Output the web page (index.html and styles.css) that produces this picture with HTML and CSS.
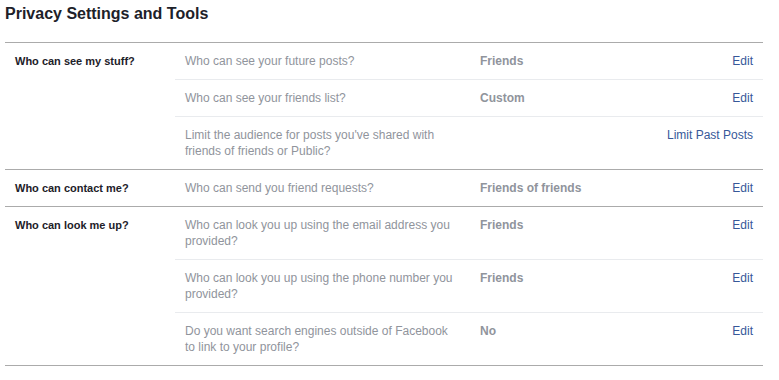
FILE: index.html
```html
<!DOCTYPE html>
<html>
<head>
  <title>Privacy Settings and Tools</title>
  <link rel="stylesheet" href="styles.css">
</head>
<body>
  <div class="page">
    <!-- Page Title -->
    <h1 class="title">Privacy Settings and Tools</h1>

    <!-- Who can see my stuff -->
    <div class="section">
      <div class="section-label">Who can see my stuff?</div>
      <div class="rows">
        <div class="row">
          <div class="question">Who can see your future posts?</div>
          <div class="value">Friends</div>
          <a class="action" href="#">Edit</a>
        </div>
        <div class="row">
          <div class="question">Who can see your friends list?</div>
          <div class="value">Custom</div>
          <a class="action" href="#">Edit</a>
        </div>
        <div class="row">
          <div class="question">Limit the audience for posts you've shared with friends of friends or Public?</div>
          <div class="value"></div>
          <a class="action" href="#">Limit Past Posts</a>
        </div>
      </div>
    </div>

    <!-- Who can contact me -->
    <div class="section">
      <div class="section-label">Who can contact me?</div>
      <div class="rows">
        <div class="row">
          <div class="question">Who can send you friend requests?</div>
          <div class="value">Friends of friends</div>
          <a class="action" href="#">Edit</a>
        </div>
      </div>
    </div>

    <!-- Who can look me up -->
    <div class="section last">
      <div class="section-label">Who can look me up?</div>
      <div class="rows">
        <div class="row">
          <div class="question">Who can look you up using the email address you provided?</div>
          <div class="value">Friends</div>
          <a class="action" href="#">Edit</a>
        </div>
        <div class="row">
          <div class="question">Who can look you up using the phone number you provided?</div>
          <div class="value">Friends</div>
          <a class="action" href="#">Edit</a>
        </div>
        <div class="row">
          <div class="question">Do you want search engines outside of Facebook to link to your profile?</div>
          <div class="value">No</div>
          <a class="action" href="#">Edit</a>
        </div>
      </div>
    </div>
  </div>
</body>
</html>
```

FILE: styles.css
```css
/* Base page: white background, Arial-width font */
body {
  font-family: 'Liberation Sans', Arial, sans-serif;
  font-size: 12px;
  line-height: 16px;
  background-color: #fff;
  color: #1d2129;
  margin: 0;
}
.page {
  width: 758px;
  padding-left: 5px;
}
.title {
  font-size: 16px;
  line-height: 20px;
  font-weight: bold;
  color: #1d2129;
  margin: 0;
  padding-top: 4px;
  margin-bottom: 18px;
}
/* Each group of settings, divided by a darker line */
.section {
  display: flex;
  border-top: 1px solid #ababab;
}
.section.last {
  border-bottom: 1px solid #ababab;
}
.section-label {
  width: 150px;
  padding: 10px;
  font-size: 11px;
  font-weight: bold;
  color: #1d2129;
}
.rows {
  flex: 1;
}
.row {
  display: grid;
  grid-template-columns: 295px 1fr auto;
  padding: 10px;
  border-top: 1px solid #e9ebee;
}
.row:first-child {
  border-top: none;
}
.question {
  padding-right: 25px;
  color: #90949c;
}
.value {
  font-weight: bold;
  color: #90949c;
}
.action {
  color: #365899;
  text-decoration: none;
  text-align: right;
}
.action:hover {
  text-decoration: underline;
}
```
